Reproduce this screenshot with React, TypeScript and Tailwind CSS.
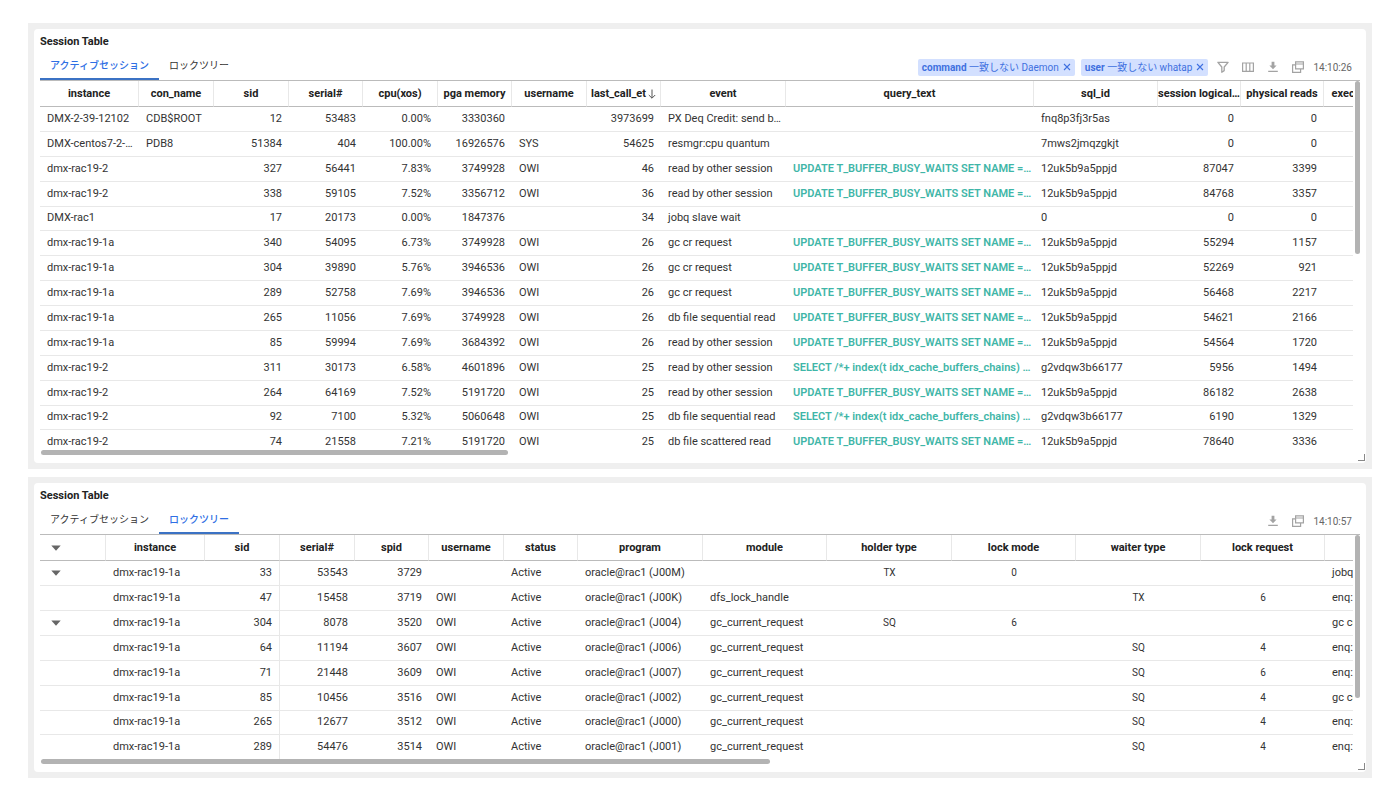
import type { ReactNode } from 'react';
import { clsx } from 'clsx';

type Align = 'left' | 'right' | 'center';

interface Column {
  name: string;
  width: string;
  align: Align;
  className?: string;
}

const sessionColumns: Column[] = [
  { name: 'instance', width: 'w-[99px]', align: 'left' },
  { name: 'con_name', width: 'w-[75px]', align: 'left' },
  { name: 'sid', width: 'w-[75px]', align: 'right' },
  { name: 'serial#', width: 'w-[74px]', align: 'right' },
  { name: 'cpu(xos)', width: 'w-[75px]', align: 'right' },
  { name: 'pga memory', width: 'w-[74px]', align: 'right' },
  { name: 'username', width: 'w-[75px]', align: 'left' },
  { name: 'last_call_et', width: 'w-[74px]', align: 'right' },
  { name: 'event', width: 'w-[125px]', align: 'left' },
  { name: 'query_text', width: 'w-[248px]', align: 'left', className: 'font-semibold text-[#3fb6a8]' },
  { name: 'sql_id', width: 'w-[124px]', align: 'left' },
  { name: 'session logical…', width: 'w-[83px]', align: 'right' },
  { name: 'physical reads', width: 'w-[83px]', align: 'right' },
  { name: 'exec count', width: 'w-[70px]', align: 'right' },
];

const UPDATE_SQL = 'UPDATE T_BUFFER_BUSY_WAITS SET NAME =…';
const SELECT_SQL = 'SELECT /*+ index(t idx_cache_buffers_chains) …';

const sessionRows: string[][] = [
  ['DMX-2-39-12102', 'CDB$ROOT', '12', '53483', '0.00%', '3330360', '', '3973699', 'PX Deq Credit: send b…', '', 'fnq8p3fj3r5as', '0', '0', ''],
  ['DMX-centos7-2-…', 'PDB8', '51384', '404', '100.00%', '16926576', 'SYS', '54625', 'resmgr:cpu quantum', '', '7mws2jmqzgkjt', '0', '0', ''],
  ['dmx-rac19-2', '', '327', '56441', '7.83%', '3749928', 'OWI', '46', 'read by other session', UPDATE_SQL, '12uk5b9a5ppjd', '87047', '3399', ''],
  ['dmx-rac19-2', '', '338', '59105', '7.52%', '3356712', 'OWI', '36', 'read by other session', UPDATE_SQL, '12uk5b9a5ppjd', '84768', '3357', ''],
  ['DMX-rac1', '', '17', '20173', '0.00%', '1847376', '', '34', 'jobq slave wait', '', '0', '0', '0', ''],
  ['dmx-rac19-1a', '', '340', '54095', '6.73%', '3749928', 'OWI', '26', 'gc cr request', UPDATE_SQL, '12uk5b9a5ppjd', '55294', '1157', ''],
  ['dmx-rac19-1a', '', '304', '39890', '5.76%', '3946536', 'OWI', '26', 'gc cr request', UPDATE_SQL, '12uk5b9a5ppjd', '52269', '921', ''],
  ['dmx-rac19-1a', '', '289', '52758', '7.69%', '3946536', 'OWI', '26', 'gc cr request', UPDATE_SQL, '12uk5b9a5ppjd', '56468', '2217', ''],
  ['dmx-rac19-1a', '', '265', '11056', '7.69%', '3749928', 'OWI', '26', 'db file sequential read', UPDATE_SQL, '12uk5b9a5ppjd', '54621', '2166', ''],
  ['dmx-rac19-1a', '', '85', '59994', '7.69%', '3684392', 'OWI', '26', 'read by other session', UPDATE_SQL, '12uk5b9a5ppjd', '54564', '1720', ''],
  ['dmx-rac19-2', '', '311', '30173', '6.58%', '4601896', 'OWI', '25', 'read by other session', SELECT_SQL, 'g2vdqw3b66177', '5956', '1494', ''],
  ['dmx-rac19-2', '', '264', '64169', '7.52%', '5191720', 'OWI', '25', 'read by other session', UPDATE_SQL, '12uk5b9a5ppjd', '86182', '2638', ''],
  ['dmx-rac19-2', '', '92', '7100', '5.32%', '5060648', 'OWI', '25', 'db file sequential read', SELECT_SQL, 'g2vdqw3b66177', '6190', '1329', ''],
  ['dmx-rac19-2', '', '74', '21558', '7.21%', '5191720', 'OWI', '25', 'db file scattered read', UPDATE_SQL, '12uk5b9a5ppjd', '78640', '3336', ''],
];

// 'toggle' marks the tree column, its cells hold 'open' for a parent row
const lockColumns: Column[] = [
  { name: 'toggle', width: 'w-[66px]', align: 'left' },
  { name: 'instance', width: 'w-[99px]', align: 'left' },
  { name: 'sid', width: 'w-[75px]', align: 'right', className: 'border-r border-r-[#e8e8e8]' },
  { name: 'serial#', width: 'w-[75px]', align: 'right' },
  { name: 'spid', width: 'w-[74px]', align: 'right' },
  { name: 'username', width: 'w-[75px]', align: 'left' },
  { name: 'status', width: 'w-[74px]', align: 'left' },
  { name: 'program', width: 'w-[125px]', align: 'left' },
  { name: 'module', width: 'w-[124px]', align: 'left' },
  { name: 'holder type', width: 'w-[125px]', align: 'center' },
  { name: 'lock mode', width: 'w-[124px]', align: 'center' },
  { name: 'waiter type', width: 'w-[125px]', align: 'center' },
  { name: 'lock request', width: 'w-[124px]', align: 'center' },
  { name: 'event', width: 'w-[125px]', align: 'left' },
];

const lockRows: string[][] = [
  ['open', 'dmx-rac19-1a', '33', '53543', '3729', '', 'Active', 'oracle@rac1 (J00M)', '', 'TX', '0', '', '', 'jobq slave wait'],
  ['', 'dmx-rac19-1a', '47', '15458', '3719', 'OWI', 'Active', 'oracle@rac1 (J00K)', 'dfs_lock_handle', '', '', 'TX', '6', 'enq: TX - contention'],
  ['open', 'dmx-rac19-1a', '304', '8078', '3520', 'OWI', 'Active', 'oracle@rac1 (J004)', 'gc_current_request', 'SQ', '6', '', '', 'gc current request'],
  ['', 'dmx-rac19-1a', '64', '11194', '3607', 'OWI', 'Active', 'oracle@rac1 (J006)', 'gc_current_request', '', '', 'SQ', '4', 'enq: SQ - contention'],
  ['', 'dmx-rac19-1a', '71', '21448', '3609', 'OWI', 'Active', 'oracle@rac1 (J007)', 'gc_current_request', '', '', 'SQ', '6', 'enq: SQ - contention'],
  ['', 'dmx-rac19-1a', '85', '10456', '3516', 'OWI', 'Active', 'oracle@rac1 (J002)', 'gc_current_request', '', '', 'SQ', '4', 'gc current request'],
  ['', 'dmx-rac19-1a', '265', '12677', '3512', 'OWI', 'Active', 'oracle@rac1 (J000)', 'gc_current_request', '', '', 'SQ', '4', 'enq: SQ - contention'],
  ['', 'dmx-rac19-1a', '289', '54476', '3514', 'OWI', 'Active', 'oracle@rac1 (J001)', 'gc_current_request', '', '', 'SQ', '4', 'enq: SQ - contention'],
];

const tabs = ['アクティブセッション', 'ロックツリー'];

const filters = [
  { field: 'command', value: '一致しない Daemon' },
  { field: 'user', value: '一致しない whatap' },
];

function FilterIcon() {
  return (
    <svg width="12" height="12" viewBox="0 0 12 12" fill="none" stroke="currentColor" strokeWidth="1.3" strokeLinejoin="round">
      <path d="M0.9 1.3h10.2L7.2 6v3.6l-2.4 1.6V6z" />
    </svg>
  );
}

function ColumnsIcon() {
  return (
    <svg width="12" height="12" viewBox="0 0 12 12" fill="none" stroke="currentColor" strokeWidth="1.2">
      <path d="M0.6 2h10.8v8.4H0.6zM4.2 2v8.4M7.8 2v8.4" />
    </svg>
  );
}

function DownloadIcon() {
  return (
    <svg width="12" height="12" viewBox="0 0 12 12" fill="currentColor">
      <path d="M4.6 0.8h2.8v3.6h2.2L6 8.2 2.4 4.4h2.2zM1.2 9.8h9.6v1.3H1.2z" />
    </svg>
  );
}

function PopupIcon() {
  return (
    <svg width="12" height="12" viewBox="0 0 12 12" fill="none" stroke="currentColor" strokeWidth="1.2">
      <path d="M3.6 0.9h7.8v7H3.6zM3.6 3h7.8M3.4 3.8H0.6v7.6h8V8" />
    </svg>
  );
}

function Caret() {
  return (
    <button type="button" aria-label="開閉" className="block pl-1 text-[#666]">
      <svg width="10" height="6" viewBox="0 0 10 6" fill="currentColor">
        <path d="M0.3 0.4h9.4L5 5.8z" />
      </svg>
    </button>
  );
}

function IconButton({ label, children }: { label: string; children: ReactNode }) {
  return (
    <button type="button" aria-label={label} className="text-[#a3a3a3]">
      {children}
    </button>
  );
}

interface DataTableProps {
  columns: Column[];
  rows: string[][];
  sizeClass: string;
  sorted?: string;
}

function DataTable({ columns, rows, sizeClass, sorted }: DataTableProps) {
  return (
    <table className={clsx('table-fixed border-separate border-spacing-0 text-[11px] leading-4 text-[#333]', sizeClass)}>
      <thead>
        <tr className="h-[26px]">
          {columns.map((col) => (
            <th
              key={col.name}
              className={clsx('border-r border-b border-r-[#e8e8e8] border-b-[#bbb] p-0 font-bold text-[#222]', col.width)}
            >
              {col.name === 'toggle' ? (
                <div className="px-[7px]">
                  <Caret />
                </div>
              ) : (
                <div className="whitespace-nowrap">
                  {col.name}
                  {sorted === col.name && (
                    <svg className="ml-[2px] inline-block" width="8" height="10" viewBox="0 0 8 10" fill="none" stroke="#555" strokeWidth="1">
                      <path d="M4 0.5v8.6M0.8 6L4 9.2 7.2 6" />
                    </svg>
                  )}
                </div>
              )}
            </th>
          ))}
        </tr>
      </thead>
      <tbody>
        {rows.map((row, i) => (
          <tr key={i}>
            {columns.map((col, j) => (
              <td
                key={col.name}
                className={clsx(
                  'p-0 whitespace-nowrap',
                  i < rows.length - 1 && 'border-b border-b-[#e8e8e8]',
                  col.align === 'right' && 'text-right',
                  col.align === 'center' && 'text-center text-[10px]',
                  col.className,
                )}
              >
                <div className="px-[7px]">{col.name === 'toggle' ? row[j] === 'open' && <Caret /> : row[j]}</div>
              </td>
            ))}
          </tr>
        ))}
      </tbody>
    </table>
  );
}

interface SessionPanelProps {
  activeTab: string;
  time: string;
  withFilters?: boolean;
  verticalThumb: string;
  horizontalThumb: string;
  children: ReactNode;
}

function SessionPanel({ activeTab, time, withFilters, verticalThumb, horizontalThumb, children }: SessionPanelProps) {
  return (
    <section className="bg-[#efefef] p-[6px]">
      <div className="relative rounded-sm bg-white px-[6px] pt-[5px] pb-2">
        <h2 className="text-[11px] leading-4 font-bold text-[#222]">Session Table</h2>
        <div className="flex h-[31px] justify-between border-b border-[#bbb]">
          <div role="tablist" className="flex">
            {tabs.map((tab) => (
              <button
                key={tab}
                type="button"
                role="tab"
                aria-selected={tab === activeTab}
                className={clsx(
                  'h-[30px] border-b-2 px-[10px] pt-[2px] text-[10px]',
                  tab === activeTab ? 'border-[#3b72c4] font-medium text-[#2f6fe4]' : 'border-transparent text-[#333]',
                )}
              >
                {tab}
              </button>
            ))}
          </div>
          <div className="flex items-center gap-[9px] pt-1 pr-2 text-[10px]">
            {withFilters && (
              <div className="flex gap-[6px]">
                {filters.map((f) => (
                  <span key={f.field} className="flex h-[17px] items-center gap-1 rounded-xs bg-[#d3e0ff] px-1 text-[#3f70e0]">
                    <span>
                      <b>{f.field}</b> {f.value}
                    </span>
                    <button type="button" aria-label={`${f.field} を削除`}>
                      <svg width="8" height="8" viewBox="0 0 8 8" stroke="currentColor" strokeWidth="1.1">
                        <path d="M1 1l6 6M7 1L1 7" />
                      </svg>
                    </button>
                  </span>
                ))}
              </div>
            )}
            <div className="flex items-center gap-[13px]">
              {withFilters && (
                <>
                  <IconButton label="フィルター">
                    <FilterIcon />
                  </IconButton>
                  <IconButton label="カラム">
                    <ColumnsIcon />
                  </IconButton>
                </>
              )}
              <IconButton label="ダウンロード">
                <DownloadIcon />
              </IconButton>
              <IconButton label="新しいウィンドウ">
                <PopupIcon />
              </IconButton>
            </div>
            <time className="text-[#666]">{time}</time>
          </div>
        </div>
        <div className="flex gap-[2px]">
          <div className="min-w-0 flex-1 overflow-hidden">{children}</div>
          <div className="w-[5px]">
            <div className={clsx('rounded-full bg-[#b3b3b3]', verticalThumb)} />
          </div>
        </div>
        <div className={clsx('relative ml-px h-[5px] rounded-full bg-[#b3b3b3]', horizontalThumb)} />
        <div className="absolute right-px bottom-[2px] h-[7px] w-[7px] border-r border-b border-[#888]" />
      </div>
    </section>
  );
}

export default function App() {
  return (
    <main className="flex flex-col gap-2 bg-white px-7 py-[23px] font-['Roboto','Noto_Sans_CJK_JP',sans-serif]">
      <SessionPanel
        activeTab="アクティブセッション"
        time="14:10:26"
        withFilters
        verticalThumb="h-[173px]"
        horizontalThumb="-mt-1 w-[35.4%]"
      >
        <DataTable columns={sessionColumns} rows={sessionRows} sizeClass="h-[373px] w-[1354px]" sorted="last_call_et" />
      </SessionPanel>
      <SessionPanel activeTab="ロックツリー" time="14:10:57" verticalThumb="h-[163px]" horizontalThumb="w-[55.2%]">
        <DataTable columns={lockColumns} rows={lockRows} sizeClass="h-[224px] w-[1410px]" />
      </SessionPanel>
    </main>
  );
}
